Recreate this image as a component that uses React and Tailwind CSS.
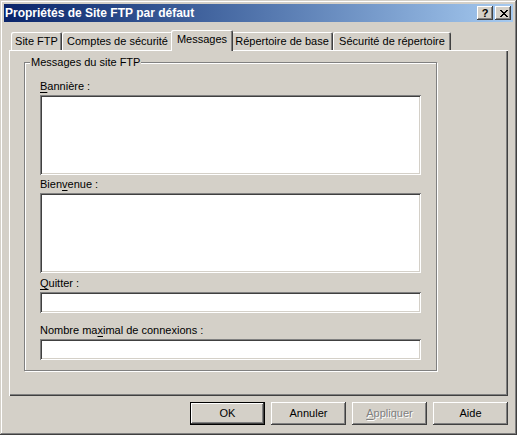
import React from 'react';

const raised =
  'shadow-[inset_-1px_-1px_#404040,inset_1px_1px_#fff,inset_-2px_-2px_#808080,inset_2px_2px_#d4d0c8]';
const sunken =
  'shadow-[inset_1px_1px_#808080,inset_-1px_-1px_#fff,inset_2px_2px_#404040,inset_-2px_-2px_#d4d0c8]';

const tabs = [
  { label: 'Site FTP', w: 'w-[51px]' },
  { label: 'Comptes de sécurité', w: 'w-[111px]' },
  { label: 'Messages', w: 'w-[62px]', active: true },
  { label: 'Répertoire de base', w: 'w-[102px]' },
  { label: 'Sécurité de répertoire', w: 'w-[118px]' },
];

// Marlett-like close glyph, 8x7 pixels
const closeRows = ['11000011', '01100110', '00111100', '00011000', '00111100', '01100110', '11000011'];

function CloseGlyph() {
  return (
    <svg width="8" height="7" viewBox="0 0 8 7" shapeRendering="crispEdges">
      {closeRows.map((row, y) =>
        row.split('').map((c, x) => (c === '1' ? <rect key={`${x}-${y}`} x={x} y={y} width="1" height="1" fill="#000" /> : null))
      )}
    </svg>
  );
}

function Tab({ label, w, active }) {
  if (active) {
    return (
      <div
        className={`${w} -mx-[2px] -mb-[1px] h-[21px] relative z-10 bg-[#d4d0c8] rounded-t-[2px] flex items-center justify-center pb-[2px] shadow-[inset_1px_1px_#fff,inset_-1px_0_#404040,inset_-2px_0_#808080]`}
      >
        {label}
      </div>
    );
  }
  return (
    <div
      className={`${w} h-[18px] bg-[#d4d0c8] rounded-t-[2px] flex items-center justify-center shadow-[inset_1px_1px_#fff,inset_-1px_0_#404040,inset_-2px_0_#808080]`}
    >
      {label}
    </div>
  );
}

function Field({ label, tall, mt }) {
  return (
    <div className={mt}>
      <div className="h-[13px] leading-[15px] mb-[3px]">{label}</div>
      <div className={`w-[381px] ${tall ? 'h-[80px]' : 'h-[21px]'} bg-white ${sunken}`} />
    </div>
  );
}

function Button({ children, isDefault, disabled }) {
  return (
    <button
      className={`w-[75px] h-[23px] flex items-center justify-center bg-[#d4d0c8] ${
        isDefault
          ? 'border border-black shadow-[inset_-1px_-1px_#404040,inset_1px_1px_#fff,inset_-2px_-2px_#808080]'
          : raised
      } ${disabled ? 'text-[#808080] [text-shadow:1px_1px_0_#fff]' : 'text-black'}`}
    >
      {children}
    </button>
  );
}

const u = (ch) => <span className="underline underline-offset-[2px]">{ch}</span>;

export default function App() {
  return (
    <div
      className={`w-[517px] h-[435px] bg-[#d4d0c8] p-[4px] flex flex-col text-[11px] text-black font-['Liberation_Sans',Arial,sans-serif] shadow-[inset_-1px_-1px_#404040,inset_1px_1px_#d4d0c8,inset_-2px_-2px_#808080,inset_2px_2px_#fff]`}
    >
      {/* Title bar */}
      <div className="h-[18px] flex items-center pl-[1px] pr-[2px] bg-linear-to-r from-[#0a246a] to-[#a6caf0]">
        <div className="flex-1 text-white font-bold text-[12px] leading-[14px]">Propriétés de Site FTP par défaut</div>
        <div className="flex gap-[2px]">
          <div className={`w-[16px] h-[14px] bg-[#d4d0c8] flex items-center justify-center font-bold text-[11px] leading-[11px] pt-[1px] ${raised}`}>
            ?
          </div>
          <div className={`w-[16px] h-[14px] bg-[#d4d0c8] flex items-center justify-center pl-[1px] ${raised}`}>
            <CloseGlyph />
          </div>
        </div>
      </div>

      {/* Body */}
      <div className="flex-1 flex flex-col px-[5px]">
        <div className="mt-[8px] h-[20px] flex items-end pl-[2px]">
          {tabs.map((t) => (
            <Tab key={t.label} {...t} />
          ))}
        </div>

        <div className="h-[346px] bg-[#d4d0c8] shadow-[inset_1px_1px_#fff,inset_-1px_-1px_#404040,inset_-2px_-2px_#808080] pt-[12px] pl-[15px]">
          <div className="relative w-[413px] h-[309px] border border-[#808080] shadow-[1px_1px_0_#fff,inset_1px_1px_0_#fff] pl-[15px] pt-[16px]">
            <div className="absolute top-[-7px] left-[5px] px-[1px] bg-[#d4d0c8] leading-[13px]">Messages du site FTP</div>
            <Field label={<>{u('B')}annière :</>} tall />
            <Field label={<>Bien{u('v')}enue :</>} tall mt="mt-[2px]" />
            <Field label={<>{u('Q')}uitter :</>} mt="mt-[3px]" />
            <Field label={<>Nombre ma{u('x')}imal de connexions :</>} mt="mt-[10px]" />
          </div>
        </div>

        <div className="mt-[6px] flex justify-end gap-[6px]">
          <Button isDefault>OK</Button>
          <Button>Annuler</Button>
          <Button disabled>{u('A')}ppliquer</Button>
          <Button>Aide</Button>
        </div>
      </div>
    </div>
  );
}
